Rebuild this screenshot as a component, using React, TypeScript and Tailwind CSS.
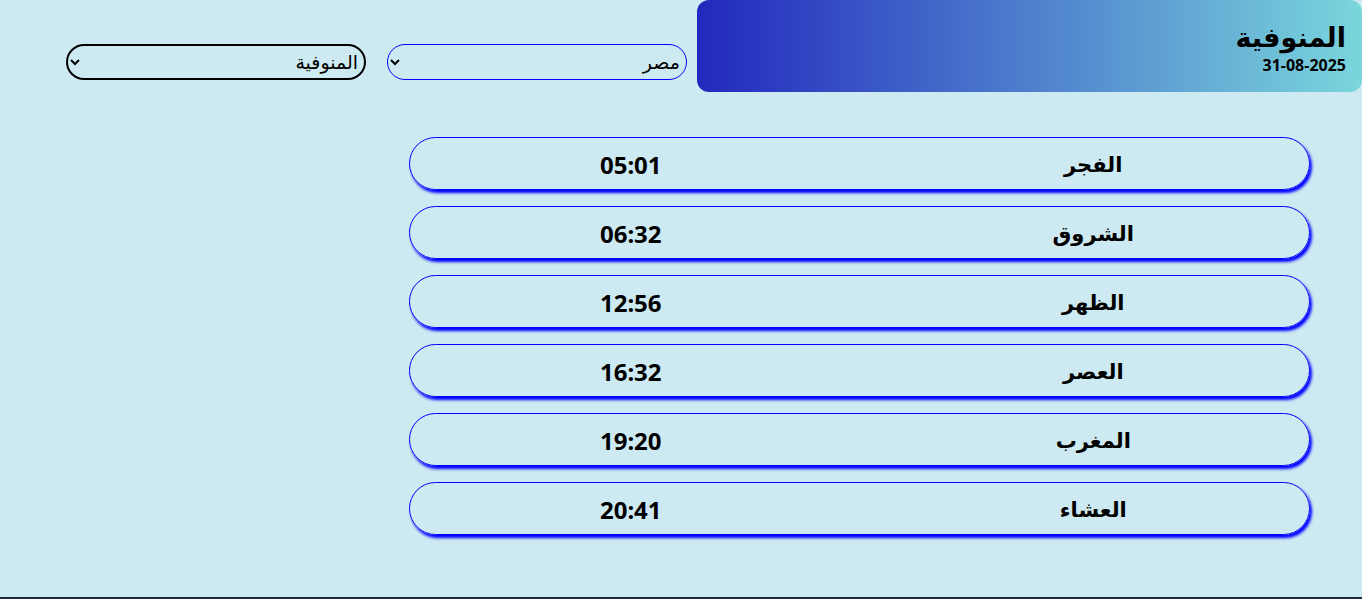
import React from "react";

const prayers = [
  { name: "الفجر", time: "05:01" },
  { name: "الشروق", time: "06:32" },
  { name: "الظهر", time: "12:56" },
  { name: "العصر", time: "16:32" },
  { name: "المغرب", time: "19:20" },
  { name: "العشاء", time: "20:41" },
];

export default function App() {
  return (
    <div
      dir="rtl"
      className="w-full min-h-[599px] bg-[#cde9f1] text-black flex flex-col"
      style={{ fontFamily: '"Noto Sans", "DejaVu Sans", sans-serif' }}
    >
      <div className="h-[597px] flex flex-col">
        <div className="flex items-start">
          <div className="w-[665px] h-[92px] rounded-[12px] bg-[linear-gradient(to_left,#7ad6dc,#2228be)] flex flex-col items-start pr-[16px] pt-[17px]">
            <div className="text-[27px] font-bold leading-[40px]">المنوفية</div>
            <div className="text-[16px] font-bold leading-[20px] mt-[-2px]">31-08-2025</div>
          </div>
          <select
            dir="rtl"
            className="mt-[44px] mr-[10px] w-[300px] h-[36px] rounded-full border border-[#0000ff] pr-[2px] pl-2 text-[19px] bg-transparent"
            defaultValue="eg"
          >
            <option value="eg">مصر</option>
          </select>
          <select
            dir="rtl"
            className="mt-[44px] mr-[21px] w-[300px] h-[36px] rounded-full border-2 border-black pr-[2px] pl-2 text-[19px] bg-transparent"
            defaultValue="m"
          >
            <option value="m">المنوفية</option>
          </select>
        </div>
        <div className="mt-[45px] mr-[52px] w-[901px] flex flex-col gap-[16px]">
          {prayers.map((p) => (
            <div
              key={p.name}
              className="h-[53px] rounded-full border border-[#0000ff] shadow-[2px_3px_3px_#0000ff] grid grid-cols-2 items-center font-bold"
            >
              <div className="text-center text-[21px] pl-[18px] pt-[2px]">{p.name}</div>
              <div className="text-center text-[24px] pr-[8px] pt-[2px]">{p.time}</div>
            </div>
          ))}
        </div>
      </div>
      <div className="h-[2px] bg-[#1e2a44]" />
    </div>
  );
}
